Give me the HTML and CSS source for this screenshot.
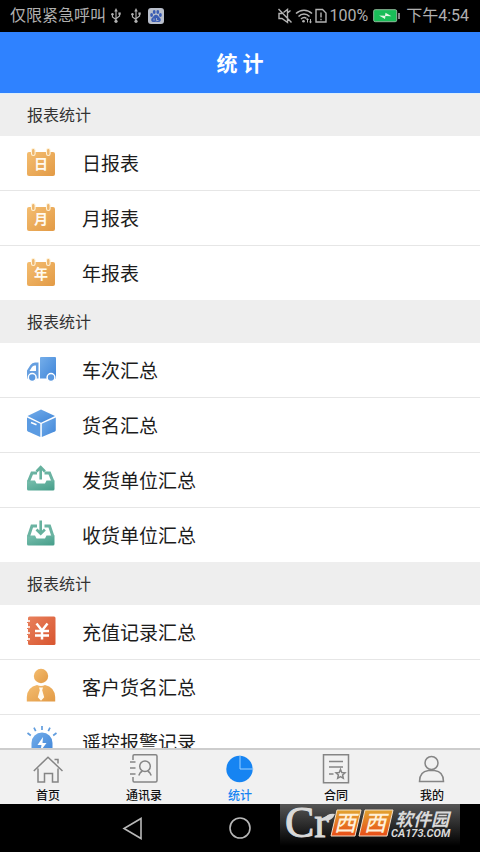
FILE: index.html
```html
<!DOCTYPE html>
<html lang="zh-CN">
<head>
<meta charset="utf-8">
<meta name="viewport" content="width=device-width, initial-scale=1">
<title>统计</title>
<link rel="stylesheet" href="styles.css">
</head>
<body>
<svg class="defs" aria-hidden="true">
  <defs>
    <linearGradient id="orange" x1="0" y1="0" x2="1" y2="1"><stop offset="0" stop-color="#f4bd70"/><stop offset="1" stop-color="#e29a45"/></linearGradient>
    <linearGradient id="blue" x1="0" y1="0" x2="1" y2="1"><stop offset="0" stop-color="#75aeea"/><stop offset="1" stop-color="#3f85d8"/></linearGradient>
    <linearGradient id="green" x1="0" y1="0" x2="1" y2="1"><stop offset="0" stop-color="#79bfae"/><stop offset="1" stop-color="#459d89"/></linearGradient>
    <linearGradient id="red" x1="0" y1="0" x2="1" y2="1"><stop offset="0" stop-color="#e8805c"/><stop offset="1" stop-color="#d8552f"/></linearGradient>
    <linearGradient id="flame" x1="0" y1="0" x2="0" y2="1"><stop offset="0" stop-color="#e2a431"/><stop offset="1" stop-color="#e84d17"/></linearGradient>
    <symbol id="usb" viewBox="0 0 12 18"><path d="M6 3v12M2 7v3l4 3M10 6v3l-4 3" fill="none" stroke="#b0b0b0" stroke-width="1.3"/><path d="M6 0l2 4H4z" fill="#b0b0b0"/><circle cx="6" cy="15" r="1.8" fill="#b0b0b0"/><circle cx="2" cy="7" r="1.4" fill="#b0b0b0"/><path d="M8.700 5h2.600v2.600H8.700z" fill="#b0b0b0"/></symbol>
    <symbol id="calendar" viewBox="0 0 30 30"><rect x="1" y="5" width="28" height="24" rx="2" fill="url(#orange)"/><rect x="5.500" y="1.500" width="3.600" height="7" rx="1.800" fill="#eeb56b" stroke="#fff4dc" stroke-width="1.100"/><rect x="20.500" y="1.500" width="3.600" height="7" rx="1.800" fill="#eeb56b" stroke="#fff4dc" stroke-width="1.100"/></symbol>
  </defs>
</svg>

<div class="statusbar">
  <div class="status-group">
    <span>仅限紧急呼叫</span>
    <svg class="usb" width="12" height="16"><use href="#usb"/></svg>
    <svg class="usb second" width="12" height="16"><use href="#usb"/></svg>
    <svg class="paw" width="16" height="16" viewBox="0 0 16 16"><rect width="16" height="16" rx="3" fill="#b9bfcb"/><g fill="#3a5cb4"><ellipse cx="3.600" cy="7" rx="1.400" ry="1.900"/><ellipse cx="6.200" cy="3.900" rx="1.400" ry="2"/><ellipse cx="9.800" cy="3.900" rx="1.400" ry="2"/><ellipse cx="12.400" cy="7" rx="1.400" ry="1.900"/><path d="M8 6.800c2 0 2.600 2 4 3.300 1.500 1.500.8 4-1.300 4-1 0-1.700-.4-2.700-.4s-1.700.4-2.700.4c-2.100 0-2.800-2.500-1.300-4C5.400 8.800 6 6.800 8 6.800z"/></g><path d="M6 10.500v2M8.500 10v2.500h2" stroke="#b9bfcb" stroke-width=".8" fill="none"/></svg>
  </div>
  <div class="status-group right">
    <svg width="16" height="16" viewBox="0 0 16 16" fill="none" stroke="#b4b4b4" stroke-width="1.400"><path d="M5 5.500H2v5h3l5.500 4V1.500L6.500 4.500M1.500 1l13 13.500M10.500 5l3-2.500"/></svg>
    <svg width="18" height="16" viewBox="0 0 18 16" fill="none" stroke="#b4b4b4" stroke-width="1.500"><path d="M1 5.500c4.500-4.500 11.500-4.500 16 0M3.500 8.500c3.200-3.200 7.800-3.200 11 0M6 11c2-1.800 4-1.800 5.500-.5"/><circle cx="8.500" cy="13.300" r="1.300" fill="#b4b4b4" stroke="none"/><path d="M12.500 14.500v-3.500M15.500 11v3.500" stroke-width="1"/><path d="M11 12l1.500-2 1.500 2zM14 13.500l1.500 2 1.500-2z" fill="#b4b4b4" stroke="none"/></svg>
    <svg width="12" height="16" viewBox="0 0 12 16" fill="none" stroke="#b4b4b4" stroke-width="1.400"><path d="M1 1.500h6.500L11 5v9H1zM6 4.500v5M6 10.700v1.600"/></svg>
    <span>100%</span>
    <svg class="battery" width="28" height="14" viewBox="0 0 28 14"><rect x=".7" y=".7" width="23" height="12" rx="1.500" fill="#19bd58" stroke="#8dbb99" stroke-width="1"/><path d="M26 4v6" stroke="#b4b4b4" stroke-width="1.500"/><path d="M6 6.500l6 .2.500-3 6 3.600-6-.2-.5 3z" fill="#e2f8e5"/></svg>
    <span>下午4:54</span>
  </div>
</div>

<header class="titlebar"><h1>统 计</h1></header>

<main class="content">
  <section>
    <h2>报表统计</h2>
    <ul>
      <li><a href="#day"><svg viewBox="0 0 30 30"><use href="#calendar"/><text class="cal" x="15" y="22">日</text></svg>日报表</a></li>
      <li><a href="#month"><svg viewBox="0 0 30 30"><use href="#calendar"/><text class="cal" x="15" y="22">月</text></svg>月报表</a></li>
      <li><a href="#year"><svg viewBox="0 0 30 30"><use href="#calendar"/><text class="cal" x="15" y="22">年</text></svg>年报表</a></li>
    </ul>
  </section>
  <section>
    <h2>报表统计</h2>
    <ul>
      <li><a href="#trips"><svg viewBox="0 0 30 30"><path d="M15 3h14a1 1 0 0 1 1 1v20.500H14V4a1 1 0 0 1 1-1z" fill="url(#blue)"/><path fill-rule="evenodd" d="M12.500 8.500v16H1v-8l3.500-5.500Q6 8.500 9 8.500zM10 11.500H8.500Q7 11.500 6 13l-2.500 4H10z" fill="#669fe0"/><g fill="#5b99e0" stroke="#fff" stroke-width="1.500"><circle cx="6.200" cy="23.500" r="3.900"/><circle cx="25" cy="23.500" r="3.900"/></g></svg>车次汇总</a></li>
      <li><a href="#goods"><svg viewBox="0 0 30 30"><path d="M15 .5l14 6.500-14 6.700L1.500 7z" fill="url(#blue)"/><path d="M1 8.500l13.300 6.300V28L2 22.500q-1-.5-1-1.500z" fill="#5b9be2"/><path d="M29.800 8.500l-14 6.300V28l13-5.500q1-.5 1-1.500z" fill="url(#blue)"/><path d="M5 13.500l5.500 2.300" stroke="#fff" stroke-width="1.500"/></svg>货名汇总</a></li>
      <li><a href="#senders"><svg viewBox="0 0 30 30"><path d="M1 16.500h8l1.500 3h8.500l1.500-3h8V25a1.500 1.500 0 0 1-1.500 1.500h-24.500A1.500 1.500 0 0 1 1 25z" fill="url(#green)"/><path d="M2.500 17.500L6 8.900H11M18.500 8.900h5l3.500 8.600" fill="none" stroke="#6bb3a2" stroke-width="3"/><path d="M14.700 15.500V4M10.500 7.500L14.700 3.200l4.200 4.300" fill="none" stroke="#66b19e" stroke-width="2.600"/></svg>发货单位汇总</a></li>
      <li><a href="#receivers"><svg viewBox="0 0 30 30"><path d="M1 16.500h8l1.500 3h8.500l1.500-3h8V25a1.500 1.500 0 0 1-1.500 1.500h-24.500A1.500 1.500 0 0 1 1 25z" fill="url(#green)"/><path d="M2.500 17.500L6 6.900H11M18.500 6.900h5l3.500 10.600" fill="none" stroke="#6bb3a2" stroke-width="3"/><path d="M14.700 1.500v12M10.500 10.500l4.200 4.200 4.200-4.200" fill="none" stroke="#66b19e" stroke-width="2.600"/></svg>收货单位汇总</a></li>
    </ul>
  </section>
  <section>
    <h2>报表统计</h2>
    <ul>
      <li><a href="#recharge"><svg viewBox="0 0 30 30"><rect x="2" y=".5" width="27.500" height="28.500" rx="1.500" fill="url(#red)"/><path d="M0 5h4M0 11h4M0 17h4M0 23h4" stroke="#fff" stroke-width="1.500"/><path d="M1 6.500h3M1 12.500h3M1 18.500h3M1 24.500h3" stroke="#e8805c"/><path d="M10.500 7.500l5.500 7 5.500-7M16 14v9.500M9 15h14M9 19.500h14" fill="none" stroke="#fff" stroke-width="2.500"/></svg>充值记录汇总</a></li>
      <li><a href="#customers"><svg viewBox="0 0 30 30"><circle cx="15" cy="5" r="7.200" fill="url(#orange)"/><path d="M.8 30.500V26Q1.500 16 11 14q4 2 8 0 9.500 2 10.200 12v4.500z" fill="url(#orange)"/><path d="M13 16.500h4l-.8 2.700 2 7-3.200 3.500-3.200-3.500 2-7z" fill="#fffaf0"/></svg>客户货名汇总</a></li>
      <li><a href="#alarms"><svg viewBox="0 0 30 30"><path d="M5.500 27V17a10.500 10.500 0 0 1 21 0v10z" fill="url(#blue)"/><path d="M17 11l-5.500 8h4l-1 6 6-8h-4z" fill="#fff"/><path d="M16 0v4M8 1.700l1.700 3.500M24 1.700l-1.700 3.500M1.500 7l3.300 2.500M30.500 7l-3.300 2.500" stroke="#619dde" stroke-width="1.700"/></svg>遥控报警记录</a></li>
    </ul>
  </section>
</main>

<nav class="tabs" aria-label="主导航">
  <a href="#home"><svg viewBox="0 0 30 30"><path d="M.8 17L15 3.200 29.500 17M5 14.500V28h6.500V19.500h8V28H25V14.500M21.500 5.500H25v4" /></svg>首页</a>
  <a href="#contacts"><svg viewBox="0 0 30 30"><path d="M4 6V2Q4 .8 5.200.8H26.500Q28 .8 28 2.300V26.500Q28 28 26.500 28H5.200Q4 28 4 26.500V23M1 8h5.500M1 14h5.500M1 20h5.500"/><circle cx="16" cy="12.300" r="5.300"/><path d="M9.800 21.500Q10.500 18.500 13.300 17M22.200 21.500Q21.500 18.500 18.700 17"/></svg>通讯录</a>
  <a class="active" href="#stats" aria-current="page"><svg viewBox="0 0 30 30"><circle class="solid" cx="14.500" cy="15" r="13.200"/><path class="cut" d="M15 1v14h13.500"/></svg>统计</a>
  <a href="#contract"><svg viewBox="0 0 30 30"><path d="M2.500.8h25v28h-25zM8 7.500h14M8 13h14M8 20h4.500M19.500 15.500l1.300 3 3.200.3-2.400 2.200.7 3.300-2.800-1.700-2.800 1.700.7-3.300-2.400-2.200 3.200-.3z"/></svg>合同</a>
  <a href="#me"><svg viewBox="0 0 30 30"><circle cx="14.500" cy="9" r="6.500"/><path d="M2.500 27.500Q2.500 17.500 11.500 16.500h6Q26.500 17.500 26.500 27.500z"/></svg>我的</a>
</nav>

<div class="sysnav">
  <button type="button" aria-label="返回"><svg viewBox="0 0 24 24"><path d="M20 2.500v20L3 12.500z"/></svg></button>
  <button type="button" aria-label="主屏幕"><svg viewBox="0 0 24 24"><circle cx="12" cy="12" r="10"/></svg></button>
  <button type="button" aria-label="最近任务"><svg viewBox="0 0 24 24"><path d="M3 3h17v17H3z"/></svg></button>
  <div class="brand">
    <svg viewBox="0 0 180 42">
      <text class="brand-cr" x="5" y="33">Cr</text>
      <path d="M44 15q3-6 11-5-3 7-8 6z" fill="#d9d9d9"/>
      <path d="M57 6h24l-6 26H51z" fill="url(#flame)" stroke="#f3dfc8"/>
      <path d="M85 6h28l-6 26H79z" fill="url(#flame)" stroke="#f3dfc8"/>
      <text class="brand-west" x="54" y="27">西</text><text class="brand-west" x="84" y="27">西</text>
      <text class="brand-cn" x="115" y="22">软件园</text>
      <text class="brand-url" x="111" y="33">CA173.COM</text>
    </svg>
  </div>
</div>
</body>
</html>
```
FILE: styles.css
```css
* {
  box-sizing: border-box;
}

body {
  margin: 0;
  height: 100vh;
  display: flex;
  flex-direction: column;
  overflow: hidden;
  background: #fff;
  color: #1c1c1c;
  font-family: Roboto, "Noto Sans CJK SC", sans-serif;
}

a {
  color: inherit;
  text-decoration: none;
}

.defs {
  position: absolute;
  width: 0;
  height: 0;
}

.statusbar {
  flex: none;
  height: 32px;
  padding: 0 11px 0 10px;
  display: flex;
  align-items: center;
  justify-content: space-between;
  background: #000;
  color: #b0b0b0;
  font-size: 16px;
  line-height: 34px;
}

.status-group {
  display: flex;
  align-items: center;
}

.usb {
  margin-left: 4px;
}

.usb.second {
  margin-left: 8px;
}

.paw {
  margin-left: 6px;
}

.right {
  gap: 2px;
}

.battery {
  margin: 0 3px;
}

.titlebar {
  flex: none;
  height: 61px;
  padding-bottom: 2px;
  display: flex;
  align-items: center;
  justify-content: center;
  background: #2f82ff;
  color: #fff;
}

h1 {
  margin: 0;
  font-size: 21px;
  font-weight: 700;
}

.content {
  flex: 1;
  min-height: 0;
  overflow: hidden;
}

h2 {
  margin: 0;
  height: 43px;
  padding-left: 27px;
  background: #eee;
  color: #333;
  font-size: 16px;
  font-weight: 400;
  line-height: 46px;
}

.content section:first-child h2 {
  box-shadow: inset 0 1px #dceefb;
}

ul {
  margin: 0;
  padding: 0;
  list-style: none;
}

li + li {
  border-top: 1px solid #e6e6e6;
}

li a {
  height: 54px;
  padding: 0 0 2px 26px;
  display: flex;
  align-items: center;
  gap: 26px;
  font-size: 19px;
}

li svg {
  width: 30px;
  height: 30px;
  overflow: visible;
}

.cal {
  fill: #fffaf0;
  font-size: 14px;
  font-weight: 700;
  text-anchor: middle;
}

.tabs {
  flex: none;
  height: 56px;
  padding-top: 4px;
  display: flex;
  background: #f1f1f1;
  border-top: 2px solid #cdcdcd;
}

.tabs a {
  flex: 1;
  display: flex;
  flex-direction: column;
  align-items: center;
  gap: 4px;
  color: #111;
  font-size: 12px;
  font-weight: 500;
  line-height: 16px;
}

.tabs svg {
  width: 30px;
  height: 30px;
  fill: none;
  stroke: #858585;
  stroke-width: 1.5;
}

.tabs .active {
  color: #1684f2;
}

.tabs .solid {
  fill: #1684f2;
  stroke: none;
}

.tabs .cut {
  stroke: #9bd0ff;
  stroke-width: 1;
}

.sysnav {
  position: relative;
  flex: none;
  height: 48px;
  display: flex;
  align-items: center;
  justify-content: center;
  gap: 83px;
  background: #000;
}

.sysnav button {
  width: 24px;
  height: 24px;
  padding: 0;
  border: 0;
  background: none;
}

.sysnav button svg {
  display: block;
  fill: none;
  stroke: #b8b8b8;
  stroke-width: 1.6;
}

.brand {
  position: absolute;
  top: 0;
  right: 20px;
  width: 180px;
  height: 42px;
  background: linear-gradient(#555, #000);
}

.brand svg {
  display: block;
  height: 42px;
  overflow: visible;
}

.brand text {
  fill: #d9d9d9;
}

.brand .brand-cr {
  font-family: "Liberation Serif", serif;
  font-size: 44px;
  stroke: #d9d9d9;
  stroke-width: 1;
}

.brand .brand-west {
  fill: #fff0d8;
  font-size: 22px;
  font-style: italic;
  font-weight: 500;
}

.brand .brand-cn {
  font-size: 18px;
  font-style: italic;
  font-weight: 700;
}

.brand .brand-url {
  font-size: 11px;
  font-style: italic;
  font-weight: 700;
}
```
